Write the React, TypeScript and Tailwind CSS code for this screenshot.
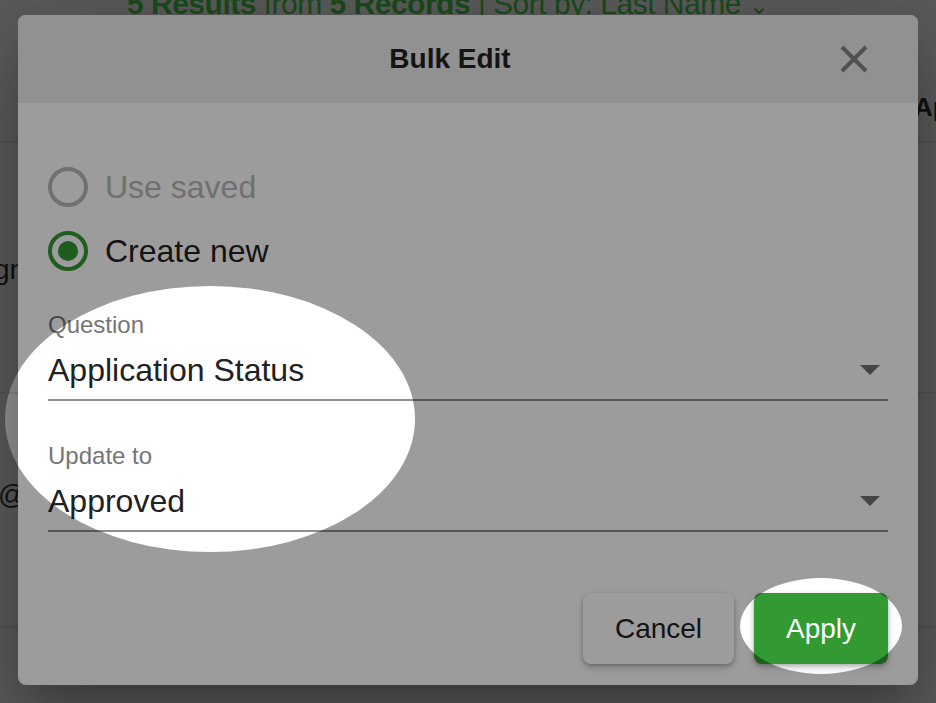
import { useState } from "react";

type Field = { label: string; value: string };

const fields: Field[] = [
  { label: "Question", value: "Application Status" },
  { label: "Update to", value: "Approved" },
];

function Radio({ checked, disabled, label }: { checked?: boolean; disabled?: boolean; label: string }) {
  return (
    <label className="flex items-center h-[64px] gap-[17px]">
      <span
        className={
          "flex items-center justify-center w-[40px] h-[40px] rounded-full border-[4px] " +
          (checked ? "border-[#339933]" : "border-[#b7b7b7]")
        }
      >
        {checked && <span className="w-[20px] h-[20px] rounded-full bg-[#339933]" />}
      </span>
      <span className={"text-[32px] " + (disabled ? "text-[#b7b7b7]" : "text-[#222222]")}>{label}</span>
    </label>
  );
}

function SelectField({ field }: { field: Field }) {
  return (
    <div>
      <div className="text-[24px] leading-[28px] text-[#757575]">{field.label}</div>
      <div className="mt-[9px] flex items-center border-b-2 border-[#8f8f8f] pb-[7px] pr-[8px]">
        <div className="flex-1 text-[32px] leading-[44px] text-[#212121]">{field.value}</div>
        <svg width="20" height="10" viewBox="0 0 20 10">
          <path d="M0 0 L20 0 L10 10 Z" fill="#717171" />
        </svg>
      </div>
    </div>
  );
}

export default function App() {
  const [mode] = useState("new");

  return (
    <div
      className="relative w-[936px] h-[703px] overflow-hidden bg-[#949494]"
      style={{ fontFamily: '"Liberation Sans", Arial, sans-serif' }}
    >
      {/* page behind the dialog */}
      <div className="flex flex-col h-[143px] border-b-2 border-[#878787]">
        <div className="-mt-[11px] pl-[127px] whitespace-nowrap text-[30px] leading-[30px] tracking-[-0.5px] text-[#2a7a2d]">
          <span className="font-bold">5 Results</span> from <span className="font-bold">5 Records</span> | Sort by: Last Name{" "}
          <span className="text-[24px]">⌄</span>
        </div>
        <div className="mt-[71px] pl-[914px] whitespace-nowrap text-[26px] leading-[30px] font-bold text-[#1c1c1c]">Ap</div>
      </div>
      <div className="h-[251px] border-b-2 border-[#878787] pt-[106px]">
        <div className="-ml-[6px] whitespace-nowrap text-[28px] text-[#1c1c1c]">gn</div>
      </div>
      <div className="h-[234px] border-b-2 border-[#878787] pt-[80px]">
        <div className="-ml-[2px] whitespace-nowrap text-[28px] text-[#1c1c1c]">@</div>
      </div>

      {/* dialog */}
      <div className="absolute left-[18px] top-[15px] w-[900px] h-[670px] rounded-[8px] bg-white overflow-hidden shadow-[0_22px_30px_-14px_rgba(0,0,0,0.2),0_48px_76px_6px_rgba(0,0,0,0.14),0_18px_92px_16px_rgba(0,0,0,0.12)]">
        <div className="flex items-center h-[88px] bg-[#eeeeee] pl-[42px] pr-[50px]">
          <div className="flex-1 text-center text-[28px] font-bold text-[#222222]">Bulk Edit</div>
          <button className="w-[28px] h-[28px]">
            <svg width="28" height="28" viewBox="0 0 28 28">
              <path d="M2 2 L26 26 M26 2 L2 26" stroke="#858585" strokeWidth="4" />
            </svg>
          </button>
        </div>

        <div className="px-[30px] pt-[52px]">
          <Radio label="Use saved" disabled checked={mode === "saved"} />
          <Radio label="Create new" checked={mode === "new"} />

          <div className="mt-[28px] flex flex-col gap-[41px]">
            {fields.map((f) => (
              <SelectField key={f.label} field={f} />
            ))}
          </div>

          <div className="mt-[61px] flex justify-end gap-[20px]">
            <button className="w-[151px] h-[71px] rounded-[8px] bg-white text-[28px] text-[#222222] shadow-[0_2px_4px_rgba(0,0,0,0.25),0_4px_10px_rgba(0,0,0,0.12)]">
              Cancel
            </button>
            <button className="w-[134px] h-[71px] rounded-[8px] bg-[#339933] text-[28px] text-white shadow-[0_2px_4px_rgba(0,0,0,0.25),0_4px_10px_rgba(0,0,0,0.12)]">
              Apply
            </button>
          </div>
        </div>
      </div>

      {/* spotlight overlay */}
      <svg className="absolute inset-0 pointer-events-none" width="936" height="703">
        <defs>
          <mask id="spot">
            <rect width="936" height="703" fill="white" />
            <ellipse cx="210" cy="419" rx="205" ry="133" fill="black" />
            <ellipse cx="821" cy="626" rx="81" ry="48" fill="black" />
          </mask>
        </defs>
        <rect width="936" height="703" fill="black" fillOpacity="0.39" mask="url(#spot)" />
      </svg>
    </div>
  );
}
